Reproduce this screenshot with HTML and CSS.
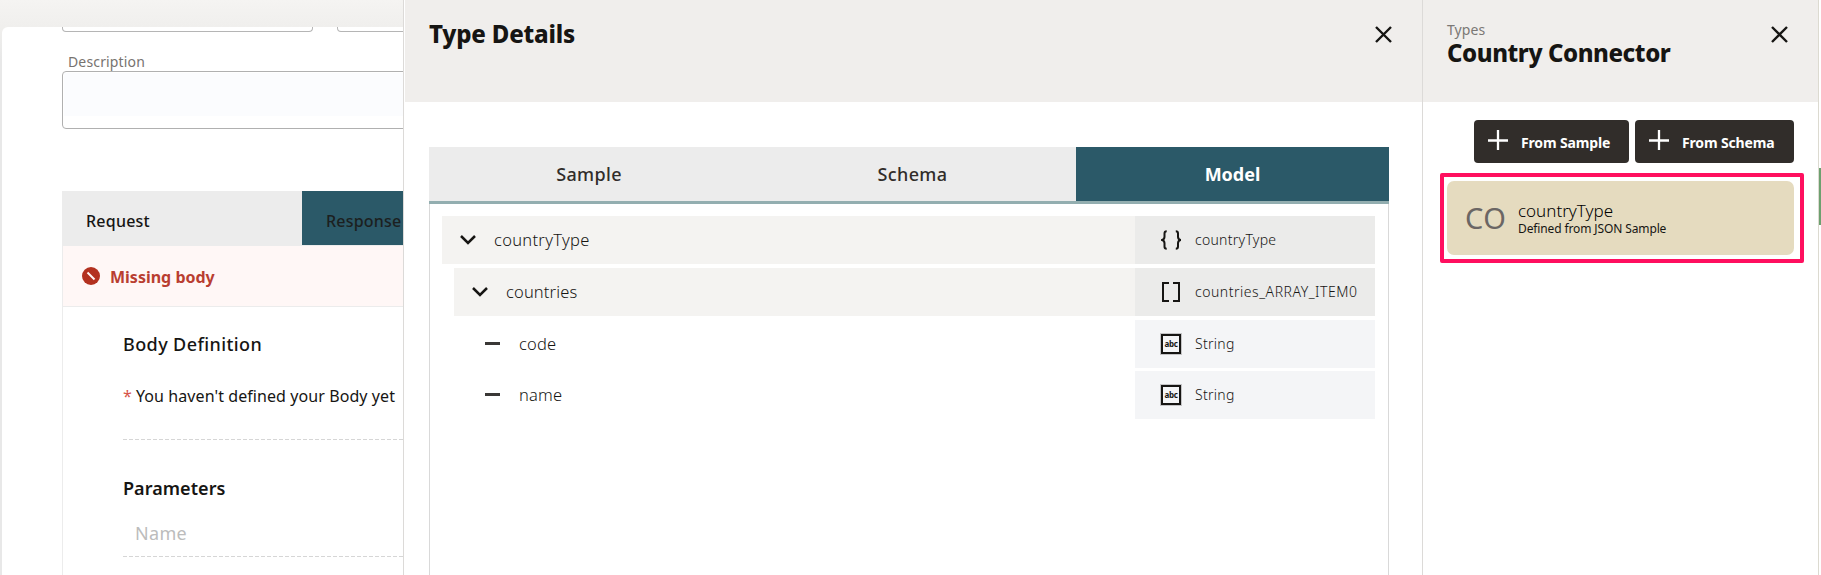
FILE: index.html
```html
<!DOCTYPE html>
<html lang="en">
<head>
<meta charset="utf-8">
<title>Type Details</title>
<link rel="stylesheet" href="styles.css">
</head>
<body>
<div class="app">
  <main class="page">
    <div class="sheet">
      <div class="fields"><div class="field-end"></div><div class="field-end"></div></div>
      <div class="label">Description</div>
      <div class="textarea"><div class="textarea-fill"></div></div>
      <div class="reqres">
        <div class="rr-tabs">
          <div class="rr-tab">Request</div>
          <div class="rr-tab rr-active">Response</div>
        </div>
        <div class="rr-body">
          <div class="alert">
            <svg width="18" height="18" viewBox="0 0 18 18"><circle cx="9" cy="9" r="9" fill="#b3311f"/><path d="M5.500 5.500l7 7" stroke="#fff7f6" stroke-width="2"/></svg>
            <span class="alert-text">Missing body</span>
          </div>
          <div class="section">
            <h3 class="sub">Body Definition</h3>
            <p class="hint"><span class="star">*</span><span>You haven't defined your Body yet</span></p>
            <div class="dash"></div>
            <h3 class="sub sub-params">Parameters</h3>
            <div class="placeholder">Name</div>
            <div class="dash"></div>
          </div>
        </div>
      </div>
    </div>
  </main>

  <section class="details">
    <header class="head">
      <h2 class="title">Type Details</h2>
      <svg class="close" width="17" height="17" viewBox="0 0 17 17"><path d="M1 1l15 15M16 1L1 16" stroke="#161513" stroke-width="2.4"/></svg>
    </header>
    <div class="tabs">
      <div class="tab tab-a">Sample</div>
      <div class="tab tab-b">Schema</div>
      <div class="tab tab-c">Model</div>
    </div>
    <div class="tree">
      <div class="row shaded">
        <div class="node"><svg width="16" height="10" viewBox="0 0 16 10"><path d="M1 1l7 7 7-7" fill="none" stroke="#161513" stroke-width="2.500"/></svg><span class="wide">countryType</span></div>
        <div class="type"><svg width="20" height="20" viewBox="0 0 20 20"><path d="M5.700 1.200C4 1.200 3.500 2 3.500 3.500v3.200c0 1.800-.7 2.800-2.500 3.300 1.800.5 2.500 1.500 2.500 3.300v3.200c0 1.500.5 2.300 2.200 2.300M14.800 1.200c1.700 0 2.200.8 2.200 2.300v3.200c0 1.800.7 2.800 2.500 3.300-1.800.5-2.500 1.500-2.500 3.300v3.200c0 1.500-.5 2.300-2.200 2.300" fill="none" stroke="#161513" stroke-width="2"/></svg><span class="type-name">countryType</span></div>
      </div>
      <div class="row shaded level1">
        <div class="node"><svg width="16" height="10" viewBox="0 0 16 10"><path d="M1 1l7 7 7-7" fill="none" stroke="#161513" stroke-width="2.500"/></svg><span>countries</span></div>
        <div class="type"><svg width="20" height="20" viewBox="0 0 20 20"><path d="M8 1H2v18h6M12 1h6v18h-6" fill="none" stroke="#161513" stroke-width="2"/></svg><span class="type-name type-array">countries_ARRAY_ITEM0</span></div>
      </div>
      <div class="row level2">
        <div class="node"><span class="minus"></span><span>code</span></div>
        <div class="type"><span class="abc">abc</span><span class="type-name">String</span></div>
      </div>
      <div class="row level2">
        <div class="node"><span class="minus"></span><span>name</span></div>
        <div class="type"><span class="abc">abc</span><span class="type-name">String</span></div>
      </div>
    </div>
  </section>

  <aside class="types">
    <header class="head">
      <div class="titles">
        <div class="over">Types</div>
        <h2 class="title">Country Connector</h2>
      </div>
      <svg class="close" width="17" height="17" viewBox="0 0 17 17"><path d="M1 1l15 15M16 1L1 16" stroke="#161513" stroke-width="2.4"/></svg>
    </header>
    <div class="buttons">
      <button class="btn btn-a"><svg width="20" height="20" viewBox="0 0 20 20"><path d="M10 0v20M0 10.500h20" stroke="#fff" stroke-width="2.300"/></svg><span class="btn-text">From Sample</span></button>
      <button class="btn btn-b"><svg width="20" height="20" viewBox="0 0 20 20"><path d="M10 0v20M0 10.500h20" stroke="#fff" stroke-width="2.300"/></svg><span class="btn-text">From Schema</span></button>
    </div>
    <div class="highlight">
      <div class="card">
        <div class="initials">CO</div>
        <div class="card-text">
          <div class="card-name">countryType</div>
          <div class="card-sub">Defined from JSON Sample</div>
        </div>
      </div>
    </div>
  </aside>
  <div class="edge"><div class="edge-mark"></div></div>
</div>
</body>
</html>
```

FILE: styles.css
```css
* { box-sizing: border-box; }
body { margin: 0; font-family: "Noto Sans", "Open Sans", sans-serif; color: #161513; background: #fff; }
h2, h3, p { margin: 0; font-weight: inherit; }
svg { display: block; flex: none; }
.app { display: flex; width: 1821px; height: 575px; overflow: hidden; white-space: nowrap; }

/* underlying page */
.page { width: 403px; height: 575px; overflow: hidden; padding: 27px 0 0 2px; background: linear-gradient(#f5f4f2, #f0efed 27px, #e8e8e8 60px); flex: none; }
.sheet { width: 900px; height: 548px; overflow: hidden; background: #fff; border-top-left-radius: 6px; padding-left: 60px; }
.fields { display: flex; gap: 24px; }
.field-end { width: 251px; height: 5px; border: 1px solid #b5b5b5; border-top: 0; border-radius: 0 0 4px 4px; }
.label { margin: 20px 0 0 6px; height: 19px; line-height: 20px; font-size: 14px; letter-spacing: 0.150px; color: #77736f; }
.textarea { width: 800px; height: 58px; border: 1px solid #b0b0b0; border-radius: 4px; padding: 1px; }
.textarea-fill { height: 43px; background: #fbfcfe; }
.reqres { margin-top: 62px; width: 800px; }
.rr-tabs { display: flex; height: 55px; background: #ececec; }
.rr-tab { width: 240px; height: 54px; padding: 6px 0 0 24px; line-height: 48px; font-size: 16px; font-weight: 500; letter-spacing: 0.220px; }
.rr-active { background: #2b5968; color: #1c1f20; }
.rr-body { height: 330px; border-left: 1px solid #ececec; }
.alert { display: flex; align-items: center; height: 61px; padding-left: 19px; gap: 10px; background: #fff7f6; border-bottom: 1px solid #ececec; color: #b93e31; font-size: 16px; font-weight: 700; }
.alert-text { padding-top: 2px; }
.section { padding-left: 60px; }
.sub { padding-top: 25px; height: 50px; line-height: 24px; font-size: 18px; font-weight: 500; letter-spacing: 0.400px; }
.hint { display: flex; margin-top: 27px; height: 55px; line-height: 24px; font-size: 16px; letter-spacing: 0.080px; }
.star { width: 13px; color: #d6544a; }
.dash { height: 1px; background: repeating-linear-gradient(90deg, #d6d6d6 0 4px, transparent 4px 6px); }
.sub-params { padding-top: 36px; height: 60px; font-weight: 600; letter-spacing: 0.050px; }
.placeholder { height: 56px; padding: 21px 0 0 12px; line-height: 24px; font-size: 18px; letter-spacing: 0.300px; color: #bcbcbc; }

/* panels */
.head { display: flex; justify-content: space-between; height: 102px; background: #f0eeec; }
.title { font-size: 24px; line-height: 30px; font-weight: 800; letter-spacing: -0.200px; }
.close { margin-top: 26px; }
.details { width: 1019px; border-left: 1px solid #dcdad8; padding-left: 1px; flex: none; }
.details .head { padding: 0 30px 0 24px; }
.details .title { padding-top: 19px; }
.tabs { display: flex; width: 960px; margin: 45px 0 0 24px; border-bottom: 3px solid #93aeb0; }
.tab { height: 54px; line-height: 54px; text-align: center; font-size: 18px; background: #ececec; color: #312d2a; }
.tab-a { width: 320px; font-weight: 500; letter-spacing: 0.350px; }
.tab-b { width: 327px; font-weight: 500; letter-spacing: 0.350px; }
.tab-c { width: 313px; background: #2b5968; color: #fff; font-weight: 700; }
.tree { width: 960px; height: 371px; margin-left: 24px; padding: 12px 13px 0 12px; border: solid #d9d9d9; border-width: 0 1px; }
.row { display: flex; justify-content: space-between; height: 48px; margin-bottom: 4px; }
.level1 { margin-left: 12px; }
.level2 { margin: 0 0 3px 24px; }
.node { flex: 1; display: flex; align-items: center; padding-left: 18px; gap: 18px; line-height: 24px; font-size: 16.500px; font-weight: 300; letter-spacing: 0.150px; color: #161513; }
.node .wide { letter-spacing: 0.300px; }
.type { width: 240px; display: flex; align-items: center; padding-left: 26px; gap: 14px; font-size: 14px; font-weight: 300; color: #161513; background: #f4f5f7; }
.type-name { padding-bottom: 1px; letter-spacing: 0.280px; }
.type-array { letter-spacing: 0.530px; }
.shaded { background: #f4f3f1; }
.shaded .type { background: #ebebea; }
.minus { width: 15px; height: 3px; margin: 0 1px 1px 1px; background: #3a3836; }
.abc { width: 20px; height: 20px; border: 2px solid #161513; outline: 1px solid #c4c4c6; font-size: 8px; line-height: 15px; font-weight: 700; text-align: center; letter-spacing: -0.400px; color: #161513; }

.types { width: 396px; border-left: 1px solid #dcdad8; flex: none; }
.types .head { padding: 0 30px 0 24px; }
.types .title { letter-spacing: -0.420px; }
.over { padding-top: 20px; height: 38px; line-height: 20px; font-size: 14px; letter-spacing: 0.100px; color: #7b7875; }
.buttons { display: flex; justify-content: flex-end; gap: 6px; margin: 18px 24px 0 0; }
.btn { display: flex; height: 43px; padding: 10px 0 0 14px; gap: 13px; border: 0; border-radius: 4px; background: #312d2a; color: #fff; font: 700 14px/24px "Noto Sans", sans-serif; letter-spacing: -0.150px; }
.btn-text { padding-top: 1px; }
.btn-a { width: 155px; }
.btn-b { width: 159px; }
.highlight { width: 364px; height: 90px; margin: 10px 0 0 17px; padding: 4px 6px 0 3px; border: 4px solid #ff0f5f; border-radius: 2px; }
.card { display: flex; height: 74px; border-radius: 7px; background: #e5dbbf; padding-left: 18px; }
.initials { width: 53px; line-height: 74px; font-size: 29px; letter-spacing: 0.400px; color: #6b6664; }
.card-text { padding-top: 20px; }
.card-name { height: 19px; line-height: 20px; font-size: 17px; font-weight: 300; letter-spacing: 0; color: #000; }
.card-sub { height: 16px; line-height: 17px; font-size: 12px; letter-spacing: -0.120px; }
.edge { width: 3px; padding-top: 168px; border-left: 1px solid #dcdad0; }
.edge-mark { height: 57px; background: #6da06f; }
```
